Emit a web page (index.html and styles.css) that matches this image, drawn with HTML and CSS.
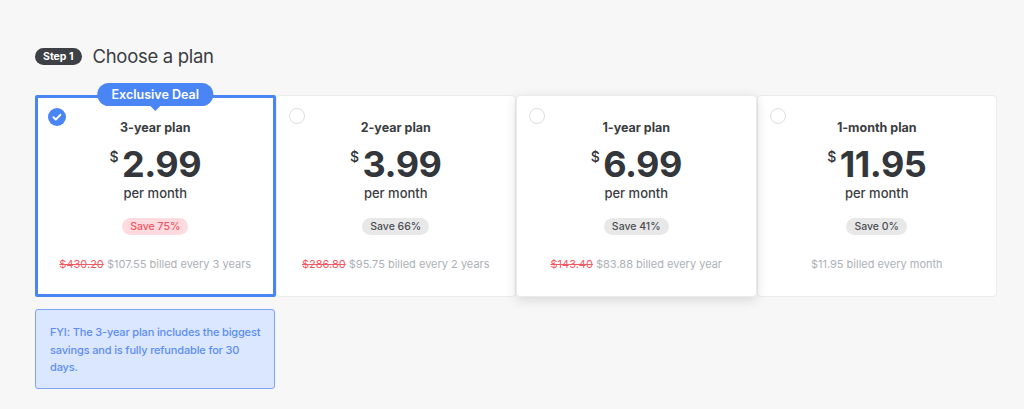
FILE: index.html
```html
<!DOCTYPE html>
<html>
    <head>
        <title>Choose a plan</title>
        <link rel="stylesheet" href="styles.css">
    </head>
    <body>
        <div class="checkout">
            <div class="step-head">
                <span class="step-pill">Step 1</span>
                <h2 class="step-title">Choose a plan</h2>
            </div>

            <!-- plan cards, first one picked by default -->
            <div class="plans">
                <div class="plan selected">
                    <span class="deal">Exclusive Deal</span>
                    <span class="radio checked">
                        <svg viewBox="0 0 18 18" width="18" height="18"><circle cx="9" cy="9" r="9" fill="#4a85f6"/><path d="M5.4 9.2l2.4 2.3 4.6-4.7" fill="none" stroke="#fff" stroke-width="1.9" stroke-linecap="round" stroke-linejoin="round"/></svg>
                    </span>
                    <p class="plan-name">3-year plan</p>
                    <p class="price"><span class="cur">$</span>2.99</p>
                    <p class="per">per month</p>
                    <span class="save hot">Save 75%</span>
                    <p class="billed"><s>$430.20</s> $107.55 billed every 3 years</p>
                </div>
                <div class="plan">
                    <span class="radio"></span>
                    <p class="plan-name">2-year plan</p>
                    <p class="price"><span class="cur">$</span>3.99</p>
                    <p class="per">per month</p>
                    <span class="save">Save 66%</span>
                    <p class="billed"><s>$286.80</s> $95.75 billed every 2 years</p>
                </div>
                <div class="plan hover">
                    <span class="radio"></span>
                    <p class="plan-name">1-year plan</p>
                    <p class="price"><span class="cur">$</span>6.99</p>
                    <p class="per">per month</p>
                    <span class="save">Save 41%</span>
                    <p class="billed"><s>$143.40</s> $83.88 billed every year</p>
                </div>
                <div class="plan">
                    <span class="radio"></span>
                    <p class="plan-name">1-month plan</p>
                    <p class="price"><span class="cur">$</span>11.95</p>
                    <p class="per">per month</p>
                    <span class="save">Save 0%</span>
                    <p class="billed">$11.95 billed every month</p>
                </div>
            </div>

            <div class="fyi">FYI: The 3-year plan includes the biggest savings and is fully refundable for 30 days.</div>
        </div>
    </body>
</html>
```

FILE: styles.css
```css
body {
    margin: 0;
    background-color: #f7f7f7;
    font-family: "Inter", "Lato", sans-serif;
    color: #3a3d42;
}
.checkout {
    padding: 45px 27px 0 35px;
}
.step-head {
    display: flex;
    align-items: center;
    gap: 11px;
}
.step-pill {
    background-color: #3d4045;
    color: white;
    font-size: 10.5px;
    font-weight: 700;
    padding: 2px 8px;
    border-radius: 9px;
    line-height: 13px;
}
.step-title {
    margin: 0;
    font-size: 18.5px;
    font-weight: 400;
    letter-spacing: -0.3px;
    color: #3a3d42;
}
.plans {
    display: grid;
    grid-template-columns: repeat(4, 1fr);
    margin-top: 28px;
}
.plan {
    position: relative;
    background-color: white;
    border: 1px solid #ebebeb;
    border-radius: 4px;
    height: 202px;
    box-sizing: border-box;
    padding-top: 22px;
    text-align: center;
}
.plan.selected {
    border: 3px solid #4a85f6;
    border-radius: 2px;
    padding-top: 20px;
    z-index: 2;
}
.plan.hover {
    z-index: 1;
    box-shadow: 0 3px 12px rgba(0, 0, 0, 0.13);
}
.plan p {
    margin: 0;
}
.deal {
    position: absolute;
    top: -15px;
    left: 50%;
    transform: translateX(-50%);
    background-color: #4a85f6;
    color: white;
    font-size: 12.5px;
    font-weight: 600;
    line-height: 23px;
    padding: 0 14px;
    border-radius: 12px;
    white-space: nowrap;
}
.deal::after {
    content: "";
    position: absolute;
    left: 50%;
    bottom: -5px;
    margin-left: -5px;
    border-left: 5px solid transparent;
    border-right: 5px solid transparent;
    border-top: 5px solid #4a85f6;
}
.radio {
    position: absolute;
    top: 12px;
    left: 12px;
    width: 14px;
    height: 14px;
    border: 1.5px solid #dedede;
    border-radius: 50%;
}
.radio.checked {
    top: 10px;
    left: 10px;
    width: 18px;
    height: 18px;
    border: 0;
}
.radio svg {
    display: block;
}
.plan-name {
    font-size: 12.5px;
    font-weight: 700;
    line-height: 20px;
}
.price {
    font-size: 36px;
    font-weight: 700;
    letter-spacing: -0.5px;
    line-height: 38px;
    margin-top: 0;
    color: #33363b;
}
.cur {
    font-size: 14px;
    font-weight: 500;
    vertical-align: 15px;
    margin-right: 4px;
}
.per {
    font-size: 13px;
    font-weight: 500;
    line-height: 18px;
    margin-top: 1px !important;
}
.save {
    display: inline-block;
    margin-top: 16px;
    background-color: #e8e8e8;
    color: #4b4e53;
    font-size: 10.5px;
    font-weight: 500;
    line-height: 17px;
    padding: 0 8px;
    border-radius: 9px;
}
.save.hot {
    background-color: #ffdade;
    color: #ef5560;
}
.billed {
    margin-top: 21px !important;
    font-size: 11px;
    line-height: 16px;
    color: #adb1b7;
}
.billed s {
    color: #f15a64;
}
.fyi {
    width: 240px;
    box-sizing: border-box;
    margin-top: 12px;
    background-color: #dbe6ff;
    border: 1px solid #7ea4f6;
    border-radius: 3px;
    padding: 14px 8px 11px 14px;
    color: #5b8ef3;
    font-size: 11px;
    letter-spacing: -0.15px;
    font-weight: 500;
    line-height: 17.5px;
}
```
